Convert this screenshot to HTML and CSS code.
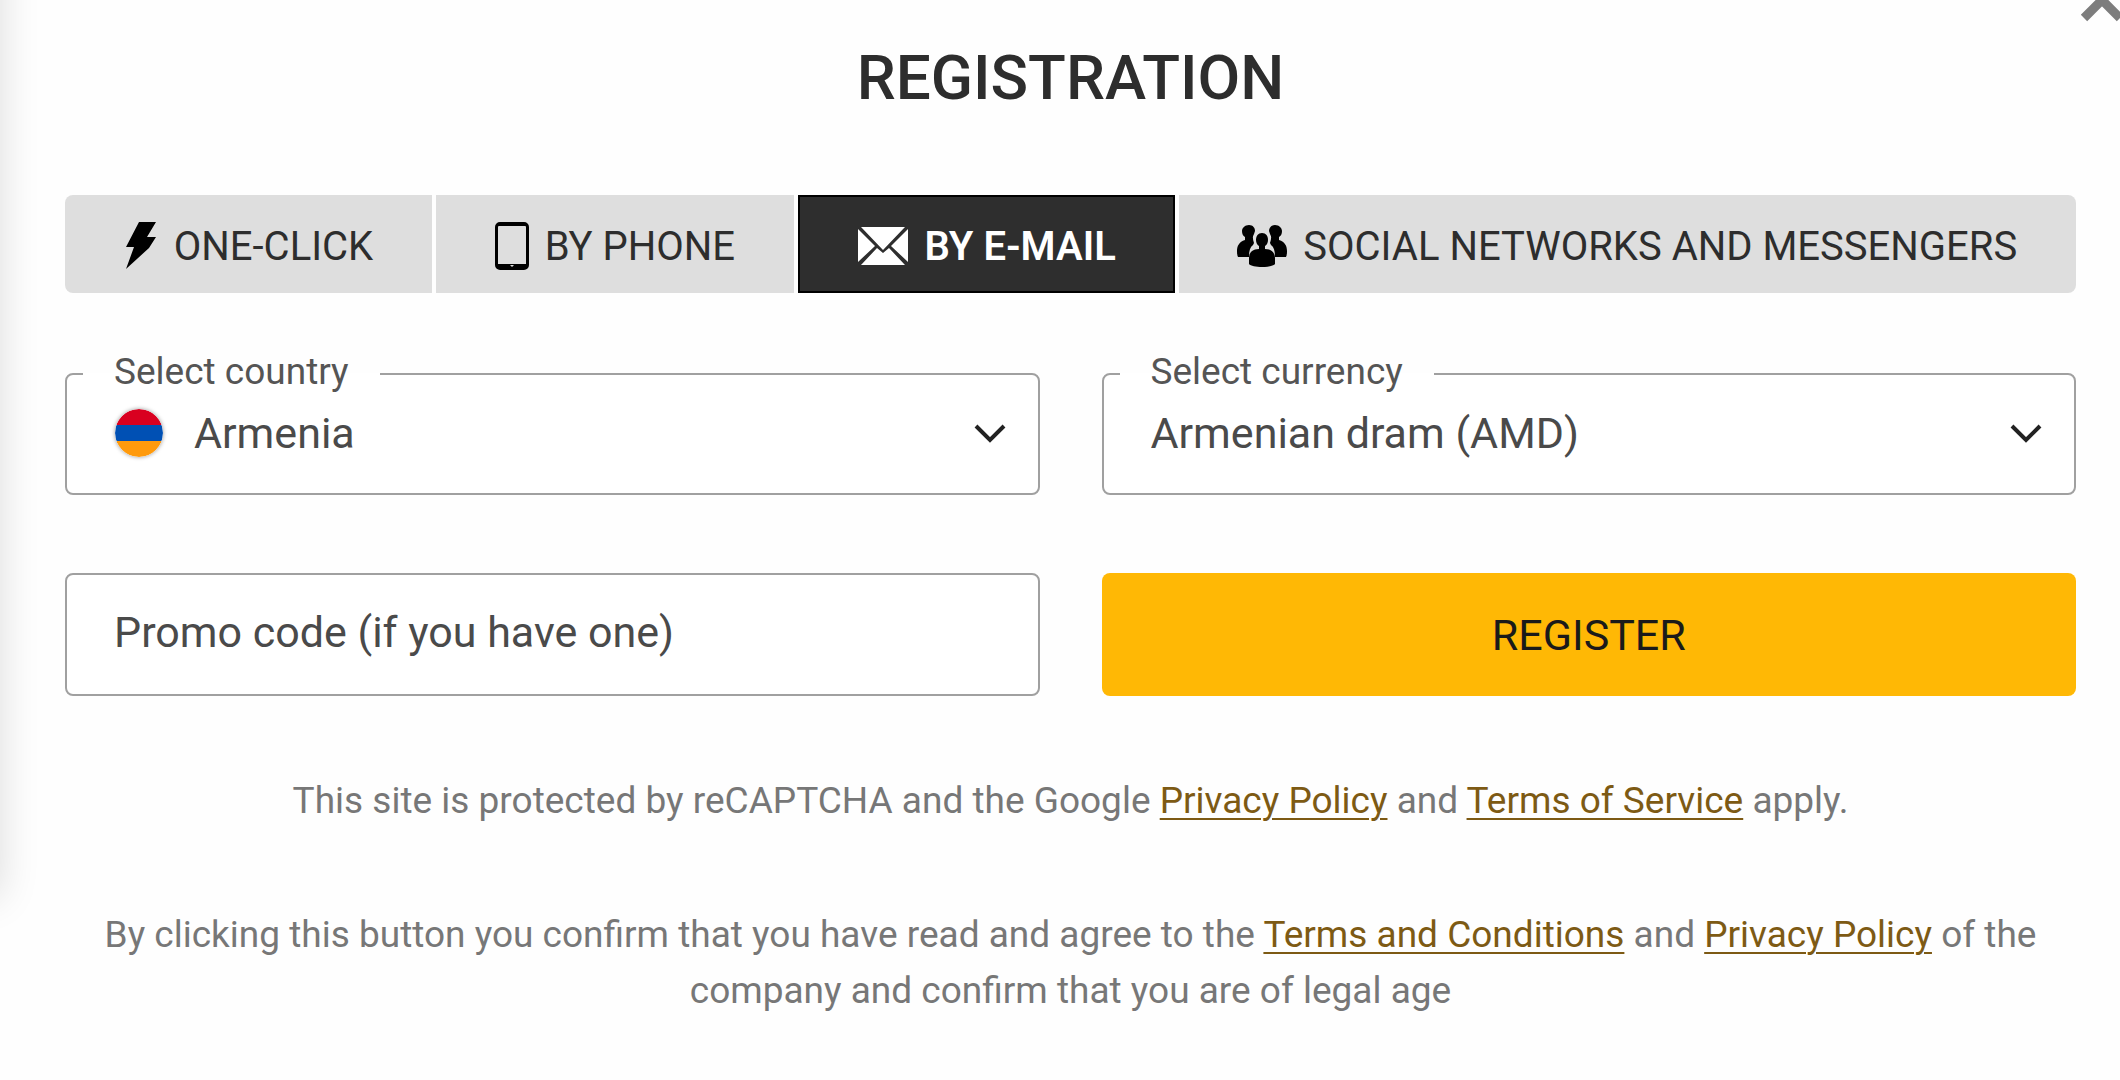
FILE: index.html
```html
<!DOCTYPE html>
<html lang="en">
<head>
    <meta charset="UTF-8">
    <meta name="viewport" content="width=device-width, initial-scale=1.0">
    <title>Registration</title>
    <link rel="stylesheet" href="styles.css">
</head>
<body>

    <div class="modal">
        <button type="button" class="close" aria-label="Close">
            <svg viewBox="0 0 48 48"><path d="M6 6l36 36M42 6L6 42"/></svg>
        </button>

        <h1 class="title">REGISTRATION</h1>

        <!-- Registration type -->
        <div class="tabs">
            <button type="button" class="tab">
                <svg class="icon-bolt" viewBox="0 0 34 50"><path d="M15 1h17l-9 15h9l-7 11L2 48l8-22H2z"/></svg>
                ONE-CLICK
            </button>
            <button type="button" class="tab">
                <svg class="icon-phone" viewBox="0 0 34 48">
                    <path fill-rule="evenodd" d="M5 0h24a5 5 0 0 1 5 5v38a5 5 0 0 1-5 5H5a5 5 0 0 1-5-5V5a5 5 0 0 1 5-5zM3 5v37h28V5a1 1 0 0 0-1-1H4a1 1 0 0 0-1 1zM15 43l2 2 2-2z"/>
                </svg>
                BY PHONE
            </button>
            <button type="button" class="tab active">
                <svg class="icon-mail" viewBox="0 0 52 38">
                    <path d="M4 0h44L26 23zM1 2l17 17L1 35zM51 2L34 19l17 16zM20 21l6 5 6-5 16 17H4z"/>
                </svg>
                BY E-MAIL
            </button>
            <button type="button" class="tab">
                <svg class="icon-group" viewBox="0 0 50 42">
                    <path d="M12 0c4 0 6 3 6 6l-1 3c-2 3-1 6 0 9l-1 2c-3 2-4 6-4 12H1c-1-2-1-4-1-6 0-5 2-9 8-11v-3C6 11 5 9 5 6c0-3 3-6 7-6z"/>
                    <path d="M38 0c-4 0-6 3-6 6l1 3c2 3 1 6 0 9l1 2c3 2 4 6 4 12h11c1-2 1-4 1-6 0-5-2-9-8-11v-3c2-1 3-3 3-6 0-3-3-6-7-6z"/>
                    <path d="M25 8c4 0 6 3 6 7 0 2-1 5-3 6v3c7 0 10 4 10 9v6c-3 4-23 4-26 0v-6c0-5 3-9 10-9v-3c-2-1-3-4-3-6 0-4 2-7 6-7z"/>
                </svg>
                SOCIAL NETWORKS AND MESSENGERS
            </button>
        </div>

        <!-- Registration form -->
        <form class="form">
            <fieldset class="field">
                <legend><label for="country">Select country</label></legend>
                <svg class="flag" viewBox="0 0 48 48">
                    <clipPath id="round"><circle cx="24" cy="24" r="24"/></clipPath>
                    <g clip-path="url(#round)">
                        <path fill="#d90020" d="M0 0h48v16H0z"/>
                        <path fill="#0050b4" d="M0 16h48v16H0z"/>
                        <path fill="#ff9a0c" d="M0 32h48v16H0z"/>
                    </g>
                </svg>
                <select id="country">
                    <option>Armenia</option>
                </select>
                <svg class="arrow" viewBox="0 0 32 20"><path d="M2 3l14 14L30 3"/></svg>
            </fieldset>
            <fieldset class="field">
                <legend><label for="currency">Select currency</label></legend>
                <select id="currency">
                    <option>Armenian dram (AMD)</option>
                </select>
                <svg class="arrow" viewBox="0 0 32 20"><path d="M2 3l14 14L30 3"/></svg>
            </fieldset>
            <input type="text" class="promo" aria-label="Promo code" placeholder="Promo code (if you have one)">
            <button type="submit" class="register">REGISTER</button>
        </form>

        <p class="note">This site is protected by reCAPTCHA and the Google <a href="#">Privacy Policy</a> and <a href="#">Terms of Service</a> apply.</p>
        <p class="note">By clicking this button you confirm that you have read and agree to the <a href="#">Terms and Conditions</a> and <a href="#">Privacy Policy</a> of the company and confirm that you are of legal age</p>
    </div>

</body>
</html>
```
FILE: styles.css
```css
* {
    box-sizing: border-box;
}
body {
    margin: 0;
    background-color: #fefefe;
    font-family: Roboto, sans-serif;
    color: #2d2d2d;
    overflow: hidden;
}
button, input, select {
    font-family: inherit;
    color: inherit;
}
button {
    border: none;
    cursor: pointer;
}
.modal {
    position: relative;
    padding: 43px 44px 0 65px;
}
/* shadow of the panel on the left */
.modal::before {
    content: "";
    position: absolute;
    top: -60px;
    left: -60px;
    bottom: 122px;
    width: 60px;
    box-shadow: 0 0 40px rgba(0, 0, 0, 0.14);
}
.close {
    position: absolute;
    top: -24px;
    right: -6px;
    width: 48px;
    height: 48px;
    padding: 0;
    background: none;
}
.close svg {
    display: block;
    fill: none;
    stroke: #7d7d7d;
    stroke-width: 9;
}
.title {
    margin: 0 0 82px;
    font-size: 62px;
    line-height: 70px;
    font-weight: 500;
    text-align: center;
}
.tabs {
    display: flex;
    gap: 4px;
    margin-bottom: 79px;
    border-radius: 8px;
    overflow: hidden;
}
.tab {
    flex: 1 1 auto;
    display: flex;
    align-items: center;
    justify-content: center;
    gap: 16px;
    height: 98px;
    padding: 4px 56px 0;
    background-color: #dedede;
    font-size: 40px;
    white-space: nowrap;
}
.tab svg {
    flex: none;
    fill: #000;
}
.tab.active {
    background-color: #2e2e2e;
    box-shadow: inset 0 0 0 2px #000;
    color: #fff;
    font-weight: 600;
}
.tab.active svg {
    fill: #fff;
}
.icon-bolt {
    width: 34px;
    height: 50px;
}
.icon-phone {
    width: 34px;
    height: 48px;
}
.icon-mail {
    width: 52px;
    height: 38px;
}
.icon-group {
    width: 50px;
    height: 42px;
}
.form {
    display: grid;
    grid-template-columns: 1fr 1fr;
    gap: 78px 62px;
    margin-bottom: 77px;
}
.field, .promo {
    min-width: 0;
    height: 123px;
    margin: 0;
    border: 2px solid #a0a0a0;
    border-radius: 8px;
    background-color: #fff;
}
.field {
    display: flex;
    align-items: center;
    padding: 0 32px 4px 16px;
}
.field legend {
    padding: 0 31px 4px;
    font-size: 37px;
    line-height: 0;
    color: #555;
}
.field select {
    flex: 1;
    height: 100%;
    padding: 0 0 0 31px;
    border: none;
    background: none;
    appearance: none;
    outline: none;
    font-size: 43px;
    color: #4a4a4a;
}
.flag {
    width: 48px;
    height: 48px;
    margin-left: 32px;
    border-radius: 50%;
    box-shadow: 0 0 4px rgba(0, 0, 0, 0.4);
}
.arrow {
    width: 32px;
    height: 20px;
    fill: none;
    stroke: #222;
    stroke-width: 4;
}
.promo {
    width: 100%;
    padding: 0 47px 6px;
    font-size: 43px;
}
.promo::placeholder {
    color: #4a4a4a;
    opacity: 1;
}
.register {
    background-color: #ffb805;
    border-radius: 8px;
    font-size: 43px;
    color: #1a1a1a;
}
.note {
    margin: 0 0 78px;
    padding: 0 30px;
    font-size: 37px;
    line-height: 56px;
    text-align: center;
    color: #777;
}
.note a {
    color: #7d5a14;
    text-underline-offset: 5px;
    text-decoration-thickness: 2px;
}
```
